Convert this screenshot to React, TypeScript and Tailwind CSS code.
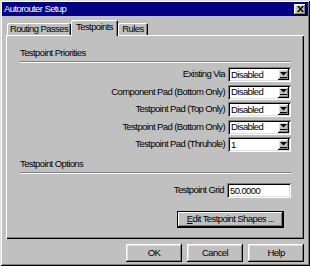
const raised =
  "shadow-[inset_-1px_-1px_#000,inset_1px_1px_#fff,inset_-2px_-2px_#808080,inset_2px_2px_#dfdfdf]";
const sunken =
  "shadow-[inset_1px_1px_#808080,inset_-1px_-1px_#fff,inset_2px_2px_#000,inset_-2px_-2px_#dfdfdf]";

const priorities = [
  { label: "Existing Via", value: "Disabled" },
  { label: "Component Pad (Bottom Only)", value: "Disabled" },
  { label: "Testpoint Pad (Top Only)", value: "Disabled" },
  { label: "Testpoint Pad (Bottom Only)", value: "Disabled" },
  { label: "Testpoint Pad (Thruhole)", value: "1" },
];

function Combo({ value }: { value: string }) {
  return (
    <div className={`relative flex h-[15px] w-[63px] items-center bg-white pl-[3px] ${sunken}`}>
      <span className="leading-none">{value}</span>
      <div
        className={`absolute right-[2px] top-[2px] flex h-[11px] w-[11px] items-center justify-center bg-[#c0c0c0] ${raised}`}
      >
        <svg width="7" height="6" viewBox="0 0 7 6">
          <polygon points="0,0 7,0 3.5,3.5" fill="#000" />
          <rect x="0" y="5" width="7" height="1" fill="#000" />
        </svg>
      </div>
    </div>
  );
}

function SectionTitle({ children }: { children: string }) {
  return (
    <>
      <div className="h-[12px] leading-[12px]">{children}</div>
      <div className="mt-[2px] h-px bg-[#808080] shadow-[0_1px_0_#fff]" />
    </>
  );
}

function Tab({ label, width, active }: { label: string; width: string; active?: boolean }) {
  return (
    <div
      className={`flex items-center justify-center rounded-t-[2px] bg-[#c0c0c0] shadow-[inset_1px_1px_#fff,inset_-1px_0_#000,inset_-2px_0_#808080] ${width} ${
        active ? "relative z-10 -mb-[1px] h-[16px] pb-[2px]" : "h-[12px]"
      }`}
    >
      {label}
    </div>
  );
}

export default function App() {
  return (
    <div
      className="flex h-[266px] w-[310px] flex-col bg-[#c0c0c0] p-[2px] text-[9.5px] tracking-[-0.6px] text-black shadow-[inset_1px_1px_#dfdfdf,inset_-1px_-1px_#000,inset_2px_2px_#fff,inset_-2px_-2px_#808080]"
      style={{ fontFamily: '"Liberation Sans", Arial, sans-serif' }}
    >
      {/* Title bar */}
      <div className="flex h-[14px] items-center justify-between bg-[#000080] pl-[2px] pr-[2px]">
        <span className="text-white">Autorouter Setup</span>
        <div className={`flex h-[11px] w-[12px] items-center justify-center bg-[#c0c0c0] ${raised}`}>
          <svg width="7" height="6" viewBox="0 0 7 6">
            <path d="M0 0h2l1.5 2 1.5-2h2L4.5 3 7 6H5L3.5 4 2 6H0l2.5-3z" fill="#000" />
          </svg>
        </div>
      </div>

      {/* Tabs */}
      <div className="mx-[4px] mt-[4px] flex items-end pl-[1px]">
        <Tab label="Routing Passes" width="w-[64px]" />
        <Tab label="Testpoints" width="w-[47px]" active />
        <Tab label="Rules" width="w-[30px]" />
      </div>

      {/* Tab panel */}
      <div className="mx-[4px] flex h-[204px] flex-col pl-[14px] pr-[13px] pt-[12px] shadow-[inset_1px_1px_#fff,inset_-1px_-1px_#000,inset_-2px_-2px_#808080]">
        <SectionTitle>Testpoint Priorities</SectionTitle>
        <div className="mt-[5px] flex flex-col gap-[2.5px]">
          {priorities.map((p) => (
            <div key={p.label} className="flex items-center justify-end gap-[3px]">
              <span>{p.label}</span>
              <Combo value={p.value} />
            </div>
          ))}
        </div>

        <div className="mt-[6px]">
          <SectionTitle>Testpoint Options</SectionTitle>
        </div>
        <div className="mt-[10px] flex items-center justify-end gap-[3px]">
          <span>Testpoint Grid</span>
          <div className={`flex h-[15px] w-[64px] items-center bg-white pl-[3px] ${sunken}`}>
            <span className="leading-none">50.0000</span>
          </div>
        </div>
        <div className="mt-[13px] mr-[7px] self-end">
          <div className="flex h-[17px] w-[107px] items-center justify-center border border-black bg-[#c0c0c0] shadow-[inset_-1px_-1px_#000,inset_1px_1px_#fff,inset_-2px_-2px_#808080]">
            <span>
              <span className="underline">E</span>dit Testpoint Shapes ...
            </span>
          </div>
        </div>
      </div>

      {/* Dialog buttons */}
      <div className="mx-[4px] mt-[5px] flex justify-end gap-[5px]">
        {["OK", "Cancel", "Help"].map((b) => (
          <div key={b} className={`flex h-[18px] w-[56px] items-center justify-center bg-[#c0c0c0] ${raised}`}>
            {b}
          </div>
        ))}
      </div>
    </div>
  );
}
